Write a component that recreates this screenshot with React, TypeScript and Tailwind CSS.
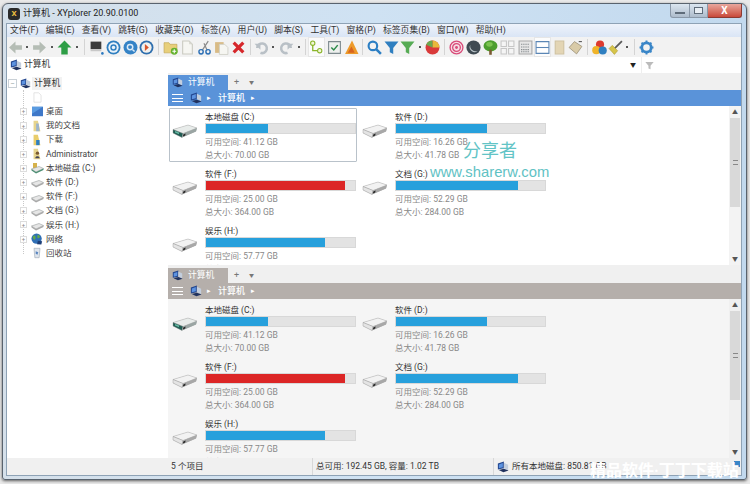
import type { ReactNode } from "react";

const font = "font-['Roboto','Noto_Sans_CJK_SC',sans-serif]";

const menus = ["文件(F)", "编辑(E)", "查看(V)", "跳转(G)", "收藏夹(O)", "标签(A)", "用户(U)", "脚本(S)", "工具(T)", "窗格(P)", "标签页集(B)", "窗口(W)", "帮助(H)"];

const drives = [
  { name: "本地磁盘 (C:)", free: "41.12 GB", total: "70.00 GB", bar: "w-[41.5%]", color: "bg-[#27a0dc]", system: true },
  { name: "软件 (D:)", free: "16.26 GB", total: "41.78 GB", bar: "w-[61.2%]", color: "bg-[#27a0dc]", system: false },
  { name: "软件 (F:)", free: "25.00 GB", total: "364.00 GB", bar: "w-[93%]", color: "bg-[#dc2626]", system: false },
  { name: "文档 (G:)", free: "52.29 GB", total: "284.00 GB", bar: "w-[82%]", color: "bg-[#27a0dc]", system: false },
  { name: "娱乐 (H:)", free: "57.77 GB", total: "311.91 GB", bar: "w-[79.7%]", color: "bg-[#27a0dc]", system: false },
];

function Svg({ children, size = 15 }: { children: ReactNode; size?: number }) {
  return (
    <svg width={size} height={size} viewBox="0 0 14 14" className="shrink-0">
      {children}
    </svg>
  );
}

function Computer({ size = 12 }: { size?: number }) {
  return (
    <Svg size={size}>
      <path d="M1 3l7-2.5v8L1 10z" fill="#24478f" />
      <path d="M2.2 4l4.6-1.6v4.8L2.2 8.6z" fill="#5d93e0" />
      <path d="M8 2l5 2.5v6L8 8.5z" fill="#c3cedd" />
      <path d="M2 10.5l6-1.5 5.5 2-6 2z" fill="#20325f" />
    </Svg>
  );
}

function ArrowLeft({ color }: { color: string }) {
  return (
    <Svg>
      <path d="M1 7l6-5.5V5h6v4H7v3.5z" fill={color} />
    </Svg>
  );
}

function ArrowRight({ color }: { color: string }) {
  return (
    <Svg>
      <path d="M13 7L7 1.5V5H1v4h6v3.5z" fill={color} />
    </Svg>
  );
}

function ArrowUp() {
  return (
    <Svg>
      <path d="M7 .5L13.5 7H10v6.5H4V7H.5z" fill="#2e9e46" />
    </Svg>
  );
}

function Ring({ outer, inner, children }: { outer: string; inner: string; children?: ReactNode }) {
  return (
    <Svg>
      <circle cx="7" cy="7" r="6.5" fill={outer} />
      <circle cx="7" cy="7" r="4.8" fill={inner} />
      {children}
    </Svg>
  );
}

function Funnel({ color }: { color: string }) {
  return (
    <Svg>
      <path d="M.5 1.5h13L8.6 7.5v5.5l-3.2-1.5v-4z" fill={color} />
    </Svg>
  );
}

function Page({ fold = "#d8d8d0" }: { fold?: string }) {
  return (
    <Svg>
      <path d="M2.5 1h6l3 3v9h-9z" fill="#f6f6f2" stroke="#c9c9c0" />
      <path d="M8.5 1v3h3z" fill={fold} />
    </Svg>
  );
}

function Tree() {
  return (
    <Svg>
      <ellipse cx="7" cy="5.5" rx="6.5" ry="5.2" fill="#4d9e2f" />
      <ellipse cx="6" cy="4" rx="3" ry="2.2" fill="#7cc450" />
      <path d="M5.8 9h2.4v4.8H5.8z" fill="#7a5a30" />
    </Svg>
  );
}

function Hdd({ system }: { system: boolean }) {
  return (
    <svg width="26" height="15" viewBox="0 0 26 15" className="shrink-0">
      <path d="M1 5.5L16 1l9 3-1 3.5L10 13.5 1 9z" fill="#bdbdbd" />
      <path d="M1 5.5L16 1l9 3L11 9.5z" fill={system ? "#e8ecea" : "#f2f2f2"} stroke="#b0b0b0" strokeWidth=".5" />
      <path d="M1 5.5l10 4-1 4L1 9z" fill={system ? "#1f5c52" : "#e4e4e4"} stroke="#8e8e8e" strokeWidth=".4" />
      <path d="M11 9.5L25 4l-1 3.5-14 6z" fill={system ? "#9aa5a3" : "#a8a8a8"} />
      <path d="M11.4 10.4l2.2-.9-.4 2-2.3 1z" fill="#222" />
      {system && <path d="M3 7l4 1.6v1.6L3 8.6z" fill="#66b8a2" />}
    </svg>
  );
}

function SmallHdd({ system }: { system?: boolean }) {
  return (
    <svg width="13" height="12" viewBox="0 0 13 12" className="shrink-0">
      {system && <path d="M2 1h4v5H2z" fill="#d6b24c" />}
      <path d="M.5 7L8 4.5 12.5 6.5 5 10z" fill="#e6e6e6" stroke="#9aa0a0" strokeWidth=".6" />
      <path d="M5 10l7.5-3.5V8L5 11.5.5 8.5V7z" fill={system ? "#4d8f74" : "#a9a9a9"} />
    </svg>
  );
}

function Sep({ className }: { className: string }) {
  return (
    <div className={`flex h-full shrink-0 items-center justify-center ${className}`}>
      <div className="h-[16px] w-px bg-[#d4d4d4]" />
    </div>
  );
}

function Dot({ className }: { className: string }) {
  return (
    <div className={`flex h-full shrink-0 items-center justify-center ${className}`}>
      <div className="h-[2px] w-[2px] bg-[#555]" />
    </div>
  );
}

function Tb({ className, children }: { className: string; children: ReactNode }) {
  return <div className={`flex h-full shrink-0 items-center justify-center ${className}`}>{children}</div>;
}

function Toolbar() {
  return (
    <div className="flex h-[20px] shrink-0 bg-[#f2f2f2]">
      <Tb className="w-[16px]"><ArrowLeft color="#b5bdb5" /></Tb>
      <Dot className="w-[8px]" />
      <Tb className="w-[17px]"><ArrowRight color="#b5bdb5" /></Tb>
      <Dot className="w-[8px]" />
      <Tb className="w-[17px]"><ArrowUp /></Tb>
      <Dot className="w-[8px]" />
      <Sep className="w-[6px]" />
      <Tb className="w-[18px]">
        <Svg>
          <path d="M1.5 1.5h10v7h-10z" fill="#3c3c3c" />
          <path d="M1.5 8.5h10v2h-10z" fill="#c8c8c8" />
          <circle cx="12.5" cy="12.5" r="1.2" fill="#2a78c0" />
        </Svg>
      </Tb>
      <Tb className="w-[17px]">
        <Ring outer="#2f7fc0" inner="#eaf3fa">
          <circle cx="7" cy="7" r="3" fill="#2f7fc0" />
          <circle cx="7" cy="7" r="1.6" fill="#eaf3fa" />
        </Ring>
      </Tb>
      <Tb className="w-[17px]">
        <Ring outer="#3583c6" inner="#3583c6">
          <circle cx="6.6" cy="6.6" r="3.2" fill="#dcebf7" />
          <circle cx="6.6" cy="6.6" r="1.8" fill="#3583c6" />
          <path d="M8.8 8.8l2 2" stroke="#dcebf7" strokeWidth="1.3" />
        </Ring>
      </Tb>
      <Tb className="w-[15px]">
        <Ring outer="#2f6fae" inner="#f1f1ee">
          <path d="M5.5 3.8L9.2 7l-3.7 3.2z" fill="#d8552b" />
        </Ring>
      </Tb>
      <Sep className="w-[8px]" />
      <Tb className="w-[16px]">
        <Svg>
          <path d="M1 2.5h4.5l1 1.5H13V12H1z" fill="#e8cf7a" stroke="#bfa24f" strokeWidth=".6" />
          <circle cx="10.5" cy="10.5" r="3.2" fill="#65b22f" />
          <path d="M8.7 10.5h3.6M10.5 8.7v3.6" stroke="#fff" strokeWidth="1" />
        </Svg>
      </Tb>
      <Tb className="w-[18px]"><Page /></Tb>
      <Tb className="w-[17px]">
        <Svg>
          <path d="M10.5 1L5 9.5M6.5 3L9.5 9.5" stroke="#8a8a8a" strokeWidth="1.1" fill="none" />
          <circle cx="3.8" cy="11" r="2" fill="none" stroke="#2c6fb5" strokeWidth="1.3" />
          <circle cx="10.3" cy="11" r="2" fill="none" stroke="#2c6fb5" strokeWidth="1.3" />
        </Svg>
      </Tb>
      <Tb className="w-[17px]">
        <Svg>
          <path d="M1 2h8v10H1z" fill="#d9bb85" />
          <path d="M5 4h5l3 3v6.5H5z" fill="#f6f6f2" stroke="#c9c9c0" strokeWidth=".7" />
        </Svg>
      </Tb>
      <Tb className="w-[16px]">
        <Svg>
          <path d="M2.5 2.5l9 9M11.5 2.5l-9 9" stroke="#d6272b" strokeWidth="3" />
        </Svg>
      </Tb>
      <Sep className="w-[8px]" />
      <Tb className="w-[14px]">
        <Svg>
          <path d="M3 7.5A4.5 4.5 0 1 1 6 12" fill="none" stroke="#b9c0c6" strokeWidth="2.4" />
          <path d="M0.5 3.5h5.5v5.5z" fill="#b9c0c6" />
        </Svg>
      </Tb>
      <Dot className="w-[10px]" />
      <Tb className="w-[16px]">
        <Svg>
          <path d="M11 7.5A4.5 4.5 0 1 0 8 12" fill="none" stroke="#b9c0c6" strokeWidth="2.4" />
          <path d="M13.5 3.5H8v5.5z" fill="#b9c0c6" />
        </Svg>
      </Tb>
      <Dot className="w-[9px]" />
      <Sep className="w-[5px]" />
      <Tb className="w-[17px] border border-[#e6e6e6] bg-[#fbfbfb]">
        <Svg>
          <path d="M3.5 4v6h5" fill="none" stroke="#8ab52a" strokeWidth="1.2" />
          <circle cx="3.5" cy="3" r="2" fill="#f3f6d8" stroke="#8ab52a" />
          <circle cx="10" cy="10" r="2" fill="#f3f6d8" stroke="#8ab52a" />
        </Svg>
      </Tb>
      <Tb className="w-[18px]">
        <Svg>
          <path d="M1.5 1.5h11v11h-11z" fill="#eef0ee" stroke="#7d8a8e" />
          <path d="M4 7l2.3 2.3L10 4.8" fill="none" stroke="#2c8a4a" strokeWidth="1.4" />
        </Svg>
      </Tb>
      <Tb className="w-[16px]">
        <Svg>
          <path d="M7.5 .5L13.5 13H1z" fill="#ed9a2a" />
          <path d="M7 6l3 6H3.5z" fill="#d8641f" />
        </Svg>
      </Tb>
      <Sep className="w-[7px]" />
      <Tb className="w-[17px]">
        <Svg>
          <circle cx="5.5" cy="5.5" r="4" fill="none" stroke="#2c7fc4" strokeWidth="2" />
          <path d="M8.5 8.5l4.5 4.5" stroke="#2c7fc4" strokeWidth="2.4" />
        </Svg>
      </Tb>
      <Tb className="w-[17px]"><Funnel color="#2f7fc0" /></Tb>
      <Tb className="w-[15px]"><Funnel color="#56ab54" /></Tb>
      <Dot className="w-[9px]" />
      <Tb className="w-[16px]">
        <Svg>
          <circle cx="7" cy="7" r="6.5" fill="#d93a3a" />
          <path d="M7 7V.5A6.5 6.5 0 0 1 13.5 7z" fill="#e8b93a" />
          <path d="M7 7L1 4.5A6.5 6.5 0 0 1 7 .5z" fill="#6aa84f" />
        </Svg>
      </Tb>
      <Sep className="w-[8px]" />
      <Tb className="w-[17px]">
        <Svg>
          <circle cx="7" cy="7" r="6" fill="#f6dce4" stroke="#d84a78" strokeWidth="1.2" />
          <circle cx="7" cy="7" r="3.6" fill="none" stroke="#d84a78" strokeWidth="1.2" />
          <circle cx="7" cy="7" r="1.3" fill="#d84a78" />
        </Svg>
      </Tb>
      <Tb className="w-[17px]">
        <Svg>
          <circle cx="7" cy="7" r="6.6" fill="#3f4a52" />
          <path d="M4 4.5A4.5 4.5 0 0 0 11 10 5 5 0 0 1 4 4.5z" fill="#b9c4c9" />
        </Svg>
      </Tb>
      <Tb className="w-[17px]"><Tree /></Tb>
      <Tb className="w-[17px]">
        <Svg>
          <path d="M1 1h5v5H1zM8 1h5v5H8zM1 8h5v5H1zM8 8h5v5H8z" fill="#f5f5f5" stroke="#c6c6c6" />
        </Svg>
      </Tb>
      <Tb className="w-[18px]">
        <Svg>
          <path d="M1 1h12v12H1z" fill="#e6e6e6" stroke="#a8a8a8" />
          <path d="M3 4h8M3 6.5h8M3 9h8M3 11h8" stroke="#6d7478" strokeDasharray="1 1" />
        </Svg>
      </Tb>
      <Tb className="w-[17px] border border-[#e6e6e6] bg-[#fcfcfc]">
        <Svg>
          <path d="M1 1.5h12v11H1z" fill="#fff" stroke="#5b86b5" />
          <path d="M1 7h12" stroke="#5b86b5" />
        </Svg>
      </Tb>
      <Tb className="w-[17px]">
        <Svg>
          <path d="M3 1h8v12H3z" fill="#e3d5b4" stroke="#cfc2a0" />
        </Svg>
      </Tb>
      <Tb className="w-[15px]">
        <Svg>
          <path d="M1 7l5-5.5L13 6l-5 7z" fill="#d9cba8" stroke="#8b8168" strokeWidth=".6" />
          <path d="M10 1.5l3 0" stroke="#555" />
        </Svg>
      </Tb>
      <Sep className="w-[8px]" />
      <Tb className="w-[16px]">
        <Svg>
          <circle cx="7.5" cy="4.2" r="3.8" fill="#dd3b2f" />
          <circle cx="4" cy="9.5" r="3.8" fill="#f0b429" />
          <circle cx="10" cy="9.8" r="3.8" fill="#2f7fc0" />
        </Svg>
      </Tb>
      <Tb className="w-[16px]">
        <Svg>
          <path d="M13 1L6 8" stroke="#5a5a5a" strokeWidth="1.6" />
          <path d="M1 8l3-3 5 5-3 3.5z" fill="#d6c44a" stroke="#a8982f" strokeWidth=".5" />
        </Svg>
      </Tb>
      <Dot className="w-[8px]" />
      <Sep className="w-[6px]" />
      <Tb className="w-[18px]">
        <Svg>
          <circle cx="7" cy="7" r="4.4" fill="none" stroke="#3a86c8" strokeWidth="2.6" />
          <path d="M7 .5v2.5M7 11v2.5M.5 7H3M11 7h2.5M2.4 2.4l1.8 1.8M9.8 9.8l1.8 1.8M11.6 2.4L9.8 4.2M4.2 9.8l-1.8 1.8" stroke="#3a86c8" strokeWidth="1.8" />
        </Svg>
      </Tb>
    </div>
  );
}

function TreeRow({ icon, label, expander = true }: { icon: ReactNode; label: string; expander?: boolean }) {
  return (
    <div className="flex h-[14.2px] items-center">
      <div className="flex w-[21px] justify-center pl-[12px]">
        {expander && (
          <div className="flex h-[5px] w-[5px] items-center justify-center bg-white text-[6px] leading-none text-[#888] outline outline-1 outline-[#ddd]">+</div>
        )}
      </div>
      <div className="ml-[3px] flex w-[12px] justify-center">{icon}</div>
      <span className="ml-[3px] text-[8.5px] whitespace-nowrap text-[#444]">{label}</span>
    </div>
  );
}

function Sidebar() {
  return (
    <div className="relative w-[161px] shrink-0 bg-white pt-[4px]">
      <div className="absolute top-[17px] left-[16px] h-[164px] border-l border-dotted border-[#c8c8c8]" />
      <div className="flex h-[13.2px] items-center">
        <div className="ml-[1px] flex h-[9px] w-[9px] items-center justify-center border border-[#c9d0d6] text-[8px] leading-none text-[#9aa]">−</div>
        <div className="ml-[3px]"><Computer size={11} /></div>
        <span className="ml-[1px] bg-[#f2f2f2] px-[2px] text-[8.8px] text-[#333]">计算机</span>
      </div>
      <div className="relative flex flex-col">
        <TreeRow expander={false} label="" icon={<Svg size={11}><path d="M2.5 1h6l3 3v9h-9z" fill="#fff" stroke="#ddd" /></Svg>} />
        <TreeRow label="桌面" icon={<Svg size={11}><path d="M0 1h14v12H0z" fill="#3f78c8" /><path d="M0 1h14L0 10z" fill="#5a9be0" /></Svg>} />
        <TreeRow label="我的文档" icon={<Svg size={12}><path d="M3 1h5l3 12H3z" fill="#e6d48c" /><path d="M6 4h3l1 9H6z" fill="#9cb4cc" /></Svg>} />
        <TreeRow label="下载" icon={<Svg size={12}><path d="M3 1h5l3 12H3z" fill="#e9cd6b" /><path d="M6 7h4v6H6z" fill="#2f7fc0" /></Svg>} />
        <TreeRow label="Administrator" icon={<Svg size={12}><path d="M3 1h5l3 12H3z" fill="#e6d48c" /><circle cx="7.5" cy="6" r="2" fill="#7a5a30" /><path d="M5 12c0-3 5-3 5 0z" fill="#445" /></Svg>} />
        <TreeRow label="本地磁盘 (C:)" icon={<SmallHdd system />} />
        <TreeRow label="软件 (D:)" icon={<SmallHdd />} />
        <TreeRow label="软件 (F:)" icon={<SmallHdd />} />
        <TreeRow label="文档 (G:)" icon={<SmallHdd />} />
        <TreeRow label="娱乐 (H:)" icon={<SmallHdd />} />
        <TreeRow label="网络" icon={<Svg size={12}><circle cx="6.5" cy="6.5" r="6" fill="#2f6fb5" /><path d="M2 4c3-3 4 1 3 3s-3 0-3-3zM8 2c3 1 3 3 1 4s-2-3-1-4z" fill="#5fa84a" /><path d="M8 9l5 .5-1 4-5-.5z" fill="#1e3f78" /></Svg>} />
        <TreeRow expander={false} label="回收站" icon={<Svg size={12}><path d="M3.5 1.5h7l-1 11h-5z" fill="#dfe5ec" stroke="#9aa6b2" strokeWidth=".7" /><path d="M5.5 5l3 1-1 3-2-1z" fill="#5a86c0" /></Svg>} />
      </div>
    </div>
  );
}

function DriveCard({ drive, focused }: { drive: (typeof drives)[number]; focused: boolean }) {
  return (
    <div className={`flex h-[54px] w-[188px] shrink-0 items-start rounded-[1px] border pt-[1px] ${focused ? "border-[#b9c2ca] bg-white" : "border-transparent"}`}>
      <div className="flex h-[35px] w-[35px] shrink-0 items-center justify-start pt-[7px] pl-[2px]">
        <Hdd system={drive.system} />
      </div>
      <div className="flex w-[151px] shrink-0 flex-col">
        <div className="h-[13px] text-[8.5px] leading-[15px] text-[#333]">{drive.name}</div>
        <div className="h-[11px] border border-[#d8d8d8] bg-[#e3e3e3]">
          <div className={`h-full ${drive.bar} ${drive.color}`} />
        </div>
        <div className="mt-[2px] h-[13px] text-[8.5px] leading-[13px] whitespace-nowrap text-[#888]">可用空间: {drive.free}</div>
        <div className="h-[13px] text-[8.5px] leading-[13px] whitespace-nowrap text-[#888]">总大小: {drive.total}</div>
      </div>
    </div>
  );
}

function Scrollbar({ dim }: { dim: boolean }) {
  return (
    <div className={`flex w-[12px] shrink-0 flex-col items-center ${dim ? "bg-[#f0f0f0]" : "bg-[#f3f3f3]"}`}>
      <div className="flex h-[12px] items-center justify-center text-[6px] leading-none text-[#555]">▲</div>
      <div className="flex h-[89px] w-[10px] items-center justify-center bg-[#d9d9d9]">
        <div className="h-[5px] w-[5px] border-y border-[#888]" />
      </div>
      <div className="flex-1" />
      <div className="flex h-[12px] items-center justify-center text-[6px] leading-none text-[#555]">▼</div>
    </div>
  );
}

function Pane({ tone, tabBg, listBg, focused, iconRing }: { tone: string; tabBg: string; listBg: string; focused: boolean; iconRing: string }) {
  return (
    <div className="flex h-[192px] shrink-0 flex-col">
      <div className="flex h-[17px] shrink-0 items-end bg-[#f0f0f0]">
        <div className={`flex h-[15px] w-[60px] items-center gap-[5px] pl-[4px] ${tabBg}`}>
          <div className={`rounded-[2px] ${iconRing}`}><Computer size={11} /></div>
          <span className="text-[8.8px] leading-none text-white">计算机</span>
        </div>
        <span className="ml-[6px] h-[15px] text-[9px] leading-[15px] text-[#777]">+</span>
        <span className="ml-[10px] h-[15px] text-[5px] leading-[15px] text-[#777]">▼</span>
      </div>
      <div className={`flex h-[16px] shrink-0 items-center pl-[4px] ${tone}`}>
        <div className="flex h-[8px] w-[11px] flex-col justify-between">
          <div className="h-px bg-white" />
          <div className="h-px bg-white" />
          <div className="h-px bg-white" />
        </div>
        <div className="ml-[7px]"><Computer size={12} /></div>
        <span className="ml-[5px] text-[7px] leading-none text-white">▸</span>
        <span className="ml-[7px] text-[9px] leading-none font-medium text-white">计算机</span>
        <span className="ml-[6px] text-[7px] leading-none text-white">▸</span>
      </div>
      <div className={`flex h-[159px] shrink-0 ${listBg}`}>
        <div className="h-full flex-1 overflow-hidden pt-[2px] pl-[1px]">
          <div className="grid w-[380px] grid-cols-[188px_188px] gap-x-[2px] gap-y-[3px]">
            {drives.map((d, i) => (
              <DriveCard key={d.name} drive={d} focused={focused && i === 0} />
            ))}
          </div>
        </div>
        <Scrollbar dim={!focused} />
      </div>
    </div>
  );
}

export default function App() {
  return (
    <div className={`relative h-[484px] w-[750px] overflow-hidden bg-[#e9e9e9] pt-[3px] pl-[2px] ${font}`}>
      <div className="flex h-[477px] w-[745px] flex-col rounded-t-[6px] rounded-b-[3px] border border-[#59636e] bg-gradient-to-r from-[#d5e0ea] via-[#cfe2f3] to-[#c2d9ee] px-[4px] pb-[4px] shadow-[0_1px_3px_rgba(0,0,0,.6)]">
        {/* title bar */}
        <div className="flex h-[20px] shrink-0 items-center">
          <div className="ml-[1px] flex h-[12px] w-[12px] items-center justify-center rounded-[3px] bg-[#2b2b2b] text-[8px] leading-none font-bold text-[#f0c040]">X</div>
          <span className="ml-[3px] text-[9px] text-[#222]">计算机 - XYplorer 20.90.0100</span>
          <div className="ml-auto flex h-[14px] self-start">
            <div className="flex w-[20px] items-end justify-center rounded-bl-[3px] border-x border-b border-[#8a98a8] bg-gradient-to-b from-[#dbe6f0] to-[#aebccc] pb-[3px]">
              <div className="h-[2px] w-[10px] border border-[#5f6c7a] bg-white" />
            </div>
            <div className="flex w-[18px] items-center justify-center border-r border-b border-[#8a98a8] bg-gradient-to-b from-[#dbe6f0] to-[#aebccc]">
              <div className="h-[7px] w-[9px] border border-[#5f6c7a] bg-[#e8eef4]" />
            </div>
            <div className="flex w-[34px] items-center justify-center rounded-br-[3px] border-r border-b border-[#8c3a32] bg-gradient-to-b from-[#e8a69c] to-[#c8483a] text-[10px] leading-none font-bold text-white">X</div>
          </div>
        </div>

        {/* client area */}
        <div className="flex h-[451px] w-[734px] shrink-0 flex-col shadow-[0_0_0_1px_#8ea2b5]">
          <div className="flex h-[13px] shrink-0 items-center bg-gradient-to-b from-[#eef3fb] to-[#dae5f5] pl-[3px] text-[8.8px] text-[#333]">
            <div className="flex gap-[7.25px] whitespace-nowrap">
              {menus.map((m) => (
                <span key={m}>{m}</span>
              ))}
            </div>
          </div>
          <Toolbar />
          <div className="flex h-[16px] shrink-0 items-center bg-white">
            <div className="ml-[3px]"><Computer size={12} /></div>
            <span className="ml-[2px] text-[8.8px] text-[#333]">计算机</span>
            <div className="ml-auto flex h-full items-center">
              <span className="text-[6px] leading-none text-[#222]">▼</span>
              <div className="ml-[5px] h-full w-px bg-[#eeeeee]" />
              <div className="mr-[87px] ml-[3px]"><Svg size={9}><path d="M.5 1.5h13L8.6 7.5v5.5l-3.2-1.5v-4z" fill="#bbb" /></Svg></div>
            </div>
          </div>
          <div className="flex h-[385px] shrink-0">
            <Sidebar />
            <div className="flex w-[573px] shrink-0 flex-col gap-px bg-[#f0f0f0]">
              <Pane tone="bg-[#5a93d9]" tabBg="bg-[#5a93d9]" listBg="bg-white" focused iconRing="bg-[#5a93d9]" />
              <Pane tone="bg-[#b5afab]" tabBg="bg-[#b5afab]" listBg="bg-[#f5f5f5]" focused={false} iconRing="bg-[#b5afab]" />
            </div>
          </div>
          <div className="relative flex h-[17px] shrink-0 items-center bg-[#f0f0f0] text-[8.5px] text-[#333]">
            <div className="flex h-full w-[306px] items-center border-r border-[#d8d8d8] pl-[164px]">5 个项目</div>
            <div className="flex h-full w-[181px] items-center border-r border-[#d8d8d8] pl-[3px] whitespace-nowrap">总可用: 192.45 GB, 容量: 1.02 TB</div>
            <div className="ml-[3px]"><Computer size={12} /></div>
            <span className="ml-[3px] whitespace-nowrap">所有本地磁盘: 850.81 GB</span>
            <div className="absolute top-[3px] right-[1px] h-[6px] w-[6px] bg-[#3a86c8]" />
          </div>
        </div>
      </div>

      {/* watermarks laid over the screenshot */}
      <div className="absolute top-[136px] left-[463px] text-[18px] leading-[30px] text-[#63c4c6]">分享者</div>
      <div className="absolute top-[162px] left-[430px] font-['Liberation_Sans',sans-serif] text-[14.8px] leading-[20px] text-[#5fc2c4]">www.sharerw.com</div>
      <div className="absolute top-[461px] left-[590px] text-[16px] leading-[20px] font-bold whitespace-nowrap text-white">精品软件·丁丁下载站</div>
    </div>
  );
}
